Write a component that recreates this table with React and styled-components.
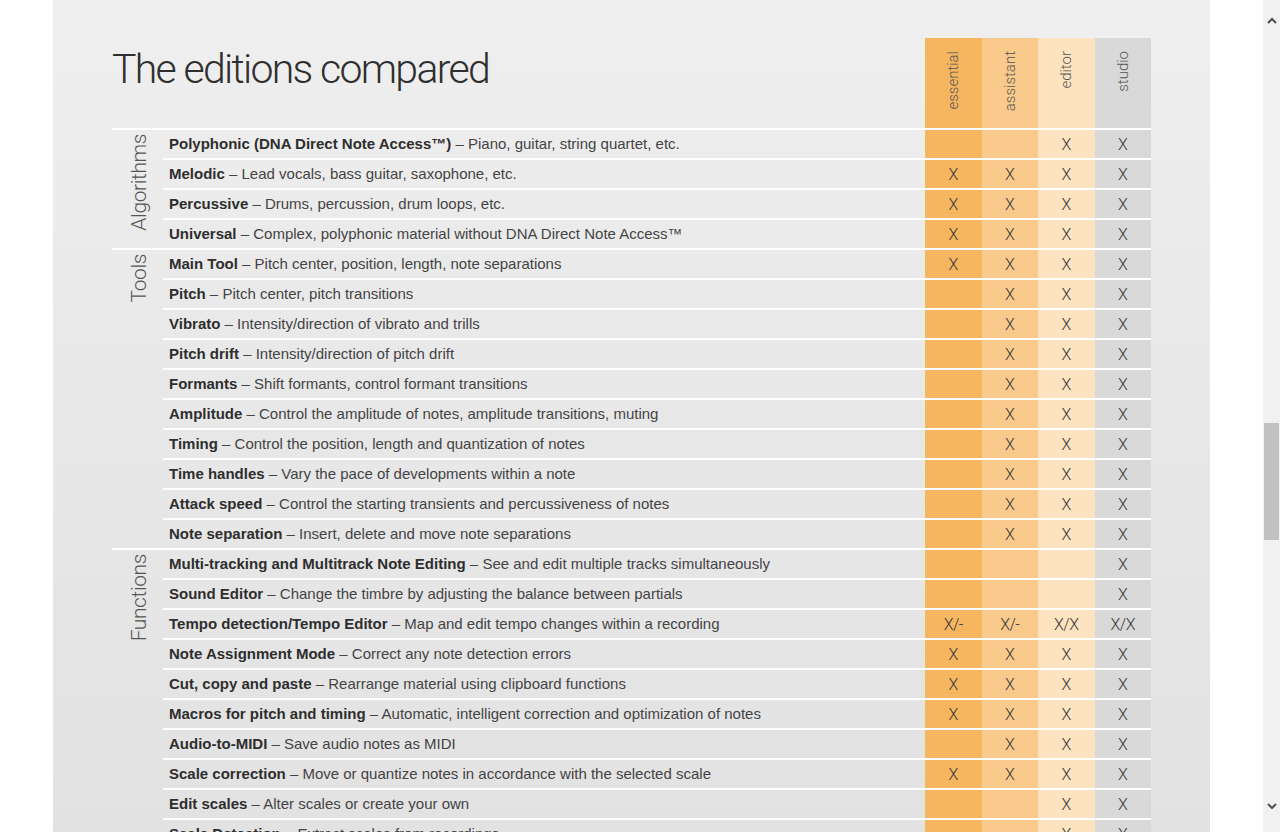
import React from "react";
import styled, { createGlobalStyle } from "styled-components";

const GlobalStyle = createGlobalStyle`
  html, body { margin: 0; padding: 0; background: #ffffff; overflow: hidden; }
  #root { height: 832px; }
`;

const COLORS = ["#f6b660", "#f9ca8c", "#fde3c0", "#d9d9d9"];
const EDITIONS = ["essential", "assistant", "editor", "studio"];

const GROUPS = [
  {
    name: "Algorithms",
    rows: [
      ["Polyphonic (DNA Direct Note Access™)", "Piano, guitar, string quartet, etc.", ["", "", "X", "X"]],
      ["Melodic", "Lead vocals, bass guitar, saxophone, etc.", ["X", "X", "X", "X"]],
      ["Percussive", "Drums, percussion, drum loops, etc.", ["X", "X", "X", "X"]],
      ["Universal", "Complex, polyphonic material without DNA Direct Note Access™", ["X", "X", "X", "X"]],
    ],
  },
  {
    name: "Tools",
    rows: [
      ["Main Tool", "Pitch center, position, length, note separations", ["X", "X", "X", "X"]],
      ["Pitch", "Pitch center, pitch transitions", ["", "X", "X", "X"]],
      ["Vibrato", "Intensity/direction of vibrato and trills", ["", "X", "X", "X"]],
      ["Pitch drift", "Intensity/direction of pitch drift", ["", "X", "X", "X"]],
      ["Formants", "Shift formants, control formant transitions", ["", "X", "X", "X"]],
      ["Amplitude", "Control the amplitude of notes, amplitude transitions, muting", ["", "X", "X", "X"]],
      ["Timing", "Control the position, length and quantization of notes", ["", "X", "X", "X"]],
      ["Time handles", "Vary the pace of developments within a note", ["", "X", "X", "X"]],
      ["Attack speed", "Control the starting transients and percussiveness of notes", ["", "X", "X", "X"]],
      ["Note separation", "Insert, delete and move note separations", ["", "X", "X", "X"]],
    ],
  },
  {
    name: "Functions",
    rows: [
      ["Multi-tracking and Multitrack Note Editing", "See and edit multiple tracks simultaneously", ["", "", "", "X"]],
      ["Sound Editor", "Change the timbre by adjusting the balance between partials", ["", "", "", "X"]],
      ["Tempo detection/Tempo Editor", "Map and edit tempo changes within a recording", ["X/-", "X/-", "X/X", "X/X"]],
      ["Note Assignment Mode", "Correct any note detection errors", ["X", "X", "X", "X"]],
      ["Cut, copy and paste", "Rearrange material using clipboard functions", ["X", "X", "X", "X"]],
      ["Macros for pitch and timing", "Automatic, intelligent correction and optimization of notes", ["X", "X", "X", "X"]],
      ["Audio-to-MIDI", "Save audio notes as MIDI", ["", "X", "X", "X"]],
      ["Scale correction", "Move or quantize notes in accordance with the selected scale", ["X", "X", "X", "X"]],
      ["Edit scales", "Alter scales or create your own", ["", "", "X", "X"]],
      ["Scale Detection", "Extract scales from recordings", ["", "", "X", "X"]],
    ],
  },
];

const Screen = styled.div`
  display: flex;
  height: 832px;
  overflow: hidden;
`;

const Page = styled.main`
  flex: 1;
  display: flex;
  justify-content: center;
  overflow: hidden;
`;

const Panel = styled.section`
  width: 1157px;
  box-sizing: border-box;
  padding: 38px 59px 0 59px;
  background: linear-gradient(180deg, #efefef 0%, #e9e9e9 40%, #e2e2e2 100%);
  font-family: "Liberation Sans", Arial, sans-serif;
  color: #333;
`;

const HeaderRow = styled.div`
  display: grid;
  grid-template-columns: 1fr repeat(4, 56.5px);
  height: 90px;
`;

const Title = styled.h1`
  margin: 0;
  padding: 6px 0 0 0;
  font-family: "Roboto", "Liberation Sans", sans-serif;
  font-weight: 300;
  font-size: 41px;
  letter-spacing: -1.7px;
  color: #2f2f2f;
  line-height: 50px;
`;

const HeadCell = styled.div`
  background: ${(p) => p.$bg};
  display: flex;
  justify-content: center;
  align-items: flex-start;
  padding-top: 13px;
`;

const HeadLabel = styled.span`
  writing-mode: vertical-rl;
  transform: rotate(180deg);
  font-family: "Roboto", "Liberation Sans", sans-serif;
  font-weight: 300;
  font-size: 15px;
  color: #555;
  line-height: 16px;
`;

const Group = styled.div`
  display: grid;
  grid-template-columns: 51px 1fr;
  border-top: 2px solid #ffffff;
`;

const CategoryCol = styled.div`
  display: flex;
  justify-content: center;
  align-items: flex-start;
  padding-top: 4px;
  padding-left: 3px;
`;

const CategoryLabel = styled.span`
  writing-mode: vertical-rl;
  transform: rotate(180deg);
  font-family: "Roboto", "Liberation Sans", sans-serif;
  font-weight: 300;
  font-size: 21px;
  line-height: 22px;
  letter-spacing: -0.4px;
  color: #555;
`;

const RowList = styled.div`
  display: flex;
  flex-direction: column;
`;

const Row = styled.div`
  display: grid;
  grid-template-columns: 1fr repeat(4, 56.5px);
  height: 28px;
  & + & {
    border-top: 2px solid #ffffff;
  }
`;

const Desc = styled.div`
  display: flex;
  align-items: center;
  padding: 0 0 1px 6px;
  font-size: 15px;
  color: #444;
  white-space: nowrap;
`;

const Strong = styled.b`
  font-weight: 700;
  color: #2e2e2e;
`;

const Mark = styled.div`
  background: ${(p) => p.$bg};
  display: flex;
  align-items: center;
  justify-content: center;
  font-family: "Roboto", "Liberation Sans", sans-serif;
  font-weight: 300;
  font-size: 16px;
  color: #3a3a3a;
  letter-spacing: -0.5px;
`;

const Scrollbar = styled.aside`
  width: 17px;
  flex: none;
  background: #f1f1f1;
  display: flex;
  flex-direction: column;
  align-items: center;
`;

const Arrow = styled.div`
  height: 17px;
  display: flex;
  align-items: center;
  justify-content: center;
  margin-top: ${(p) => p.$top || 0}px;
`;

const Track = styled.div`
  flex: 1;
  width: 100%;
  display: flex;
  flex-direction: column;
`;

const Thumb = styled.div`
  margin-top: ${(p) => p.$offset}px;
  margin-left: 1px;
  width: 15px;
  height: 117px;
  background: #c1c1c1;
`;

const Chevron = ({ up }) => (
  <svg width="10" height="7" viewBox="0 0 10 7">
    <polyline
      points={up ? "1,6 5,2 9,6" : "1,1 5,5 9,1"}
      fill="none"
      stroke="#505050"
      strokeWidth="2"
    />
  </svg>
);

export default function App() {
  return (
    <>
      <GlobalStyle />
      <Screen>
        <Page>
          <Panel>
            <HeaderRow>
              <Title>The editions compared</Title>
              {EDITIONS.map((e, i) => (
                <HeadCell key={e} $bg={COLORS[i]}>
                  <HeadLabel>{e}</HeadLabel>
                </HeadCell>
              ))}
            </HeaderRow>
            {GROUPS.map((g) => (
              <Group key={g.name}>
                <CategoryCol>
                  <CategoryLabel>{g.name}</CategoryLabel>
                </CategoryCol>
                <RowList>
                  {g.rows.map(([name, desc, marks]) => (
                    <Row key={name}>
                      <Desc>
                        <Strong>{name}</Strong>&nbsp;– {desc}
                      </Desc>
                      {marks.map((m, i) => (
                        <Mark key={i} $bg={COLORS[i]}>
                          {m}
                        </Mark>
                      ))}
                    </Row>
                  ))}
                </RowList>
              </Group>
            ))}
          </Panel>
        </Page>
        <Scrollbar>
          <Arrow $top={12}>
            <Chevron up />
          </Arrow>
          <Track>
            <Thumb $offset={394} />
          </Track>
          <Arrow>
            <Chevron />
          </Arrow>
          <Arrow />
        </Scrollbar>
      </Screen>
    </>
  );
}
